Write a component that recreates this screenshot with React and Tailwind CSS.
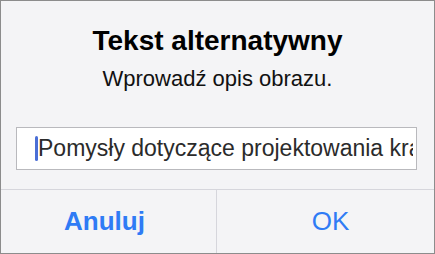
export default function App() {
    return (
        <div className="w-[435px] h-[254px] border border-[#8c8c8c] bg-[#f4f4f6] flex flex-col" style={{ fontFamily: '"Liberation Sans", Arial, sans-serif' }}>
            {/* header */}
            <div className="flex flex-col items-center pt-[22px]">
                <h1 className="text-[28px] leading-[36px] font-bold text-black">Tekst alternatywny</h1>
                <p className="text-[22px] leading-[26px] mt-[7px] text-[#111]">Wprowadź opis obrazu.</p>
            </div>

            {/* input */}
            <div className="pl-[15px] pr-[17px] mt-[35px]">
                <div className="h-[43px] bg-white border border-[#b9b9bd] flex items-center pl-[18px] overflow-hidden">
                    <span className="w-[3px] h-[25px] bg-[#4b6fd6] rounded-sm shrink-0"></span>
                    <input
                        type="text"
                        readOnly
                        value="Pomysły dotyczące projektowania krajobrazu"
                        className="flex-1 min-w-0 bg-transparent outline-none text-[23px] text-[#2b2b2b] p-0 pr-[3px]"
                    />
                </div>
            </div>

            {/* buttons */}
            <div className="mt-[19px] flex flex-1 border-t border-[#d6d6dc]">
                <button className="flex-1 flex items-center justify-center pr-[8px] text-[26px] font-bold text-[#2f7bf5]">Anuluj</button>
                <div className="w-px bg-[#d6d6dc]"></div>
                <button className="flex-1 flex items-center justify-center pl-[10px] text-[26px] text-[#2f7bf5]">OK</button>
            </div>
        </div>
    );
}
